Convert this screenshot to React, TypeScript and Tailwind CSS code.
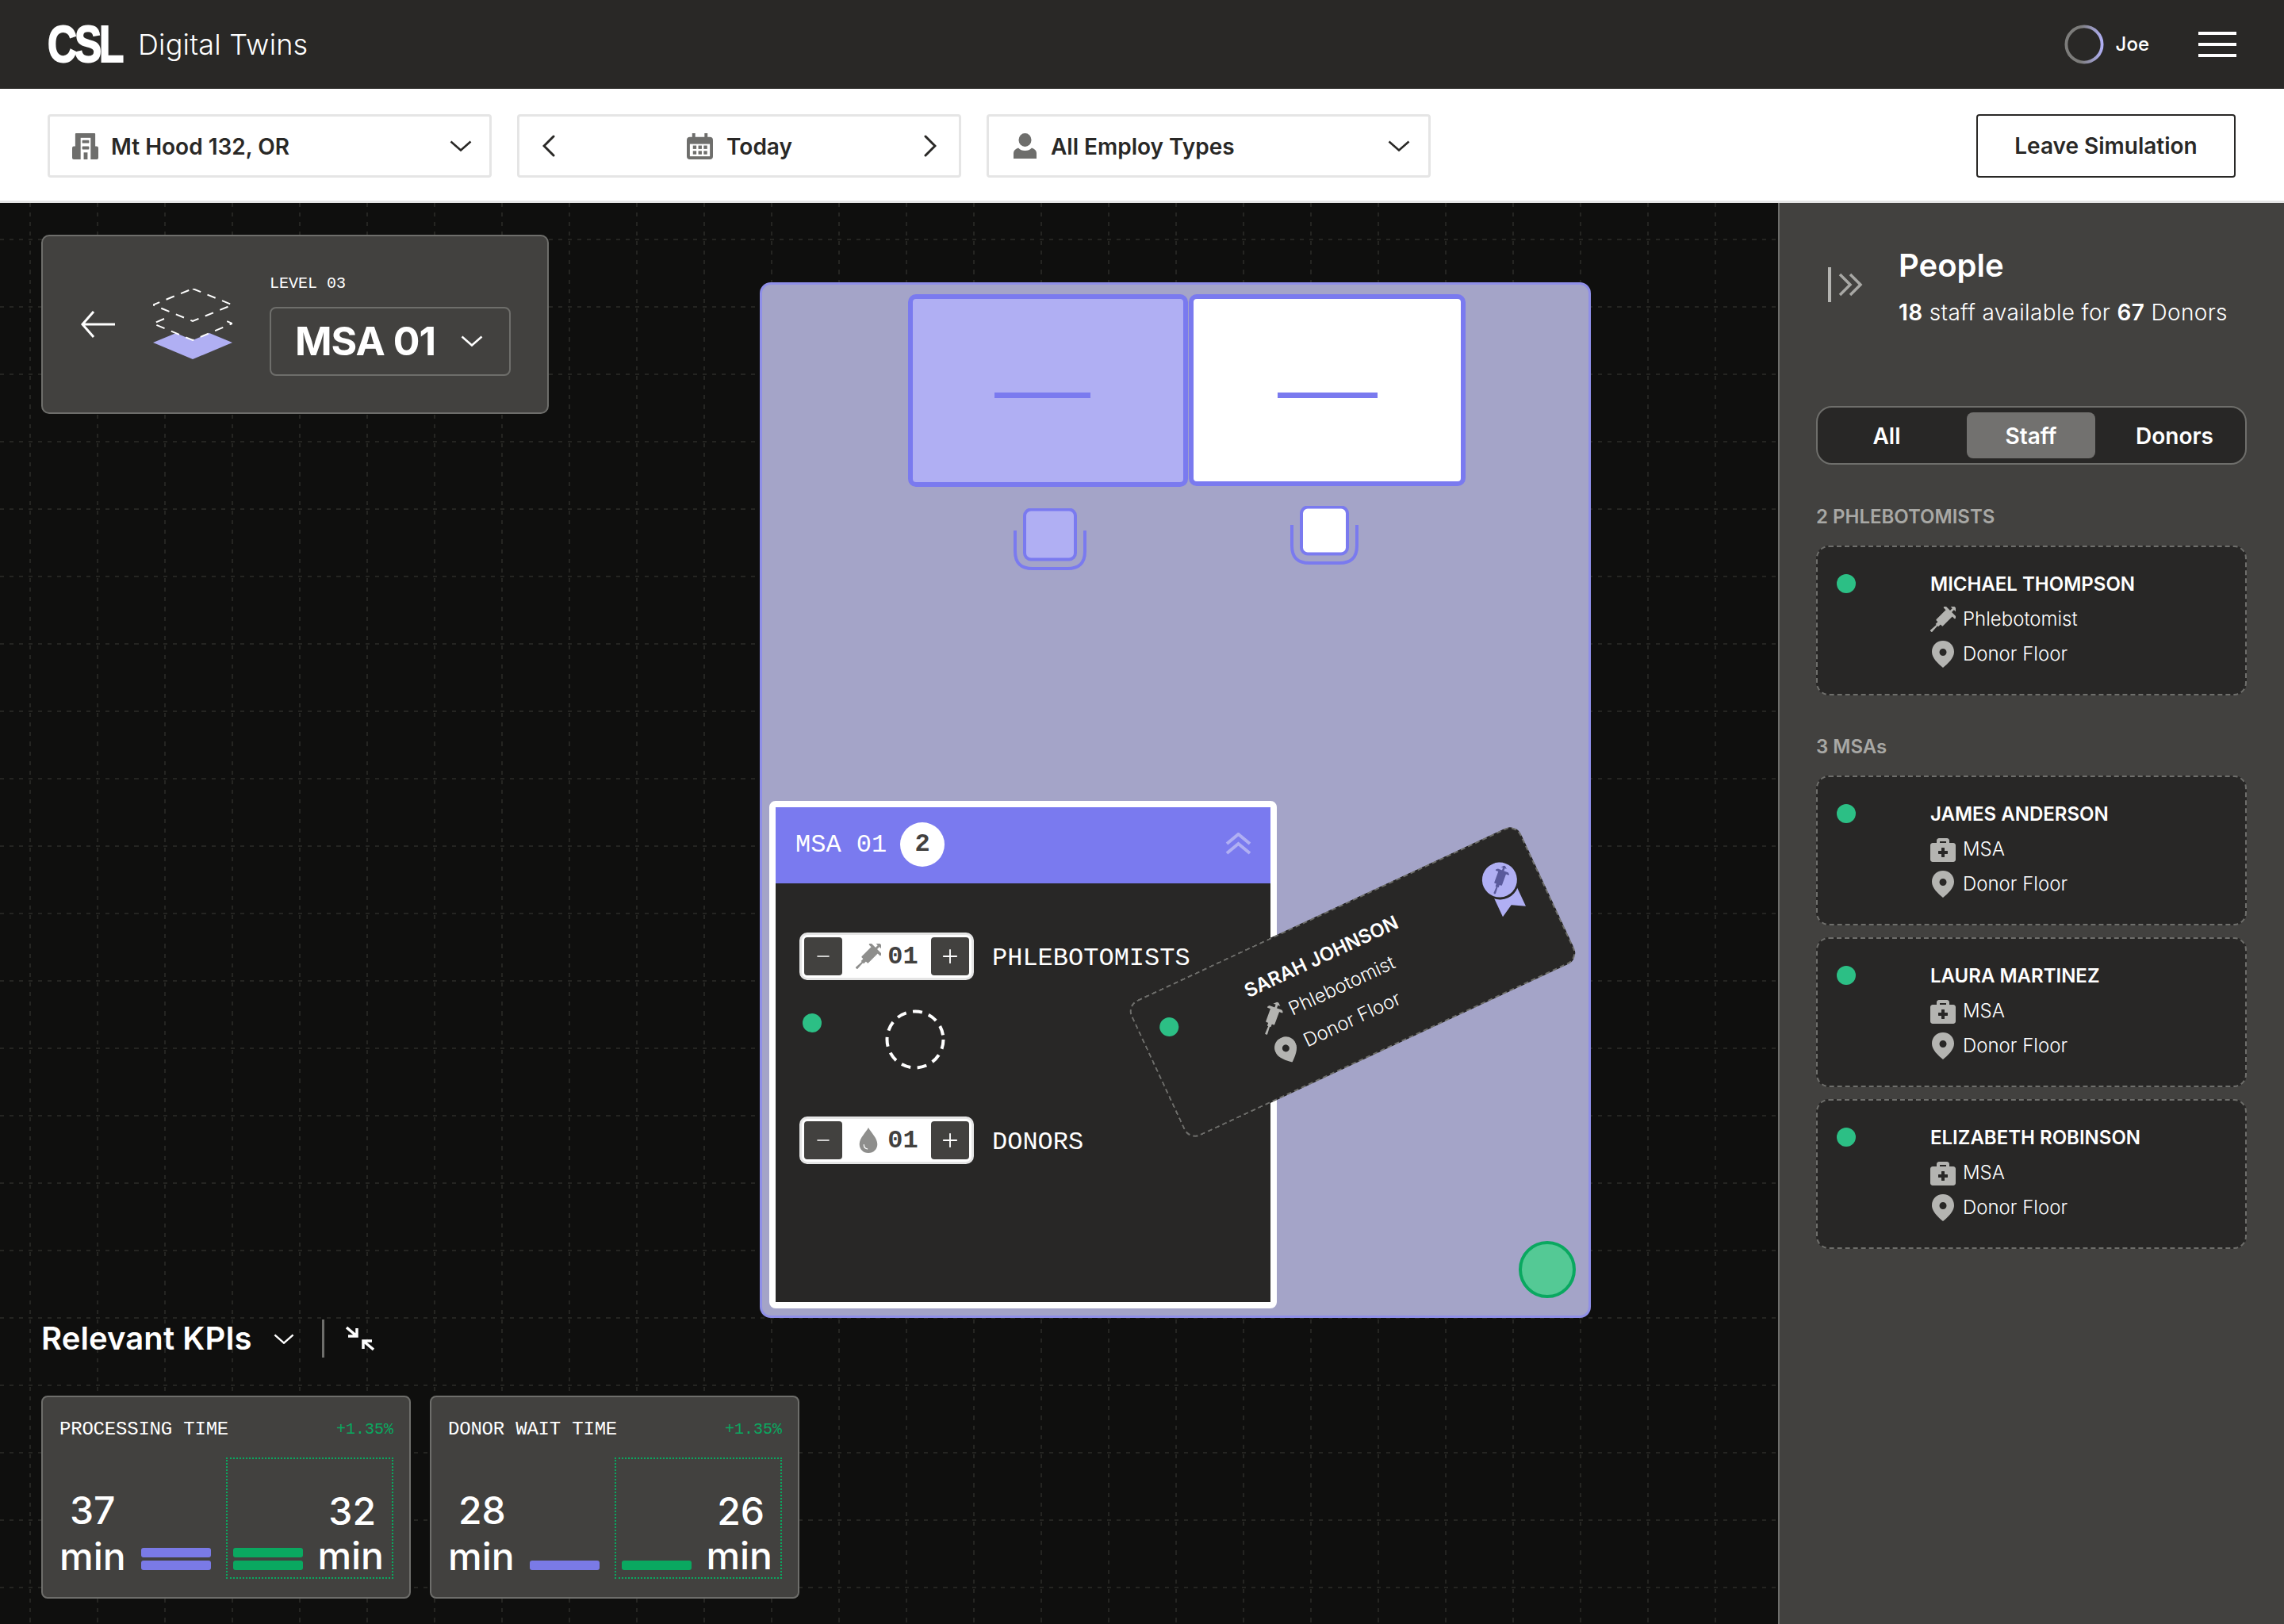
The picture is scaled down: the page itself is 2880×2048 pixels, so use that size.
import React from "react";
import { Minus, Plus } from "lucide-react";
import { FaBriefcaseMedical } from "react-icons/fa";

const mono = "font-['Liberation_Mono',monospace]";

function Chevron({ className = "" }: { className?: string }) {
  return (
    <svg viewBox="0 0 28 14" fill="none" stroke="currentColor" strokeWidth="2.6" className={className}>
      <path d="M1.5 1.5 14 12.5 26.5 1.5" />
    </svg>
  );
}

function DateArrow({ flip = false }: { flip?: boolean }) {
  return (
    <svg viewBox="0 0 16 28" fill="none" stroke="#292826" strokeWidth="3" strokeLinecap="round" className="h-[28px] w-[16px]">
      <path d={flip ? "M2 2 14 14 2 26" : "M14 2 2 14 14 26"} />
    </svg>
  );
}

function BuildingIcon() {
  return (
    <svg viewBox="0 0 34 34" className="h-[33px] w-[33px] shrink-0">
      <rect x="0" y="17" width="34" height="17" rx="2" fill="#6e6e6c" />
      <rect x="4" y="0" width="26" height="34" rx="1" fill="#6e6e6c" />
      <rect x="11" y="6" width="13" height="28" fill="#fff" />
      <rect x="13" y="9" width="9" height="4" rx="1" fill="#6e6e6c" />
      <rect x="13" y="17" width="9" height="4" rx="1" fill="#6e6e6c" />
      <rect x="15" y="25" width="5" height="9" fill="#6e6e6c" />
    </svg>
  );
}

function CalendarIcon() {
  return (
    <svg viewBox="0 0 34 34" className="h-[33px] w-[33px] shrink-0">
      <rect x="7" y="0" width="4" height="8" fill="#6e6e6c" />
      <rect x="23" y="0" width="4" height="8" fill="#6e6e6c" />
      <rect x="0" y="5" width="34" height="29" rx="4" fill="#6e6e6c" />
      <rect x="4" y="14" width="26" height="16" fill="#fff" />
      {[8, 15, 22].map((x) =>
        [16, 23].map((y) => <rect key={`${x}-${y}`} x={x} y={y} width="4.5" height="4.5" fill="#6e6e6c" />)
      )}
    </svg>
  );
}

function PersonIcon() {
  return (
    <svg viewBox="0 0 29 32" className="h-[32px] w-[29px] shrink-0" fill="#6e6e6c">
      <ellipse cx="14.5" cy="8.5" rx="8" ry="8.5" />
      <path d="M0 32v-7c0-3 2-5 6-6.500 2 2.500 5 3.500 8.500 3.500s6.500-1 8.500-3.500c4 1.500 6 3.500 6 6.500v7z" />
    </svg>
  );
}

function PinIcon() {
  return (
    <svg viewBox="0 0 28 34" className="h-[34px] w-[28px] shrink-0">
      <path
        fillRule="evenodd"
        fill="#b4b4b1"
        d="M14 0C6 0 0 6 0 14c0 8 8 15 14 20 6-5 14-12 14-20C28 6 22 0 14 0zm0 10a4.500 4.500 0 1 1 0 9 4.500 4.500 0 0 1 0-9z"
      />
    </svg>
  );
}

function SyringeIcon({ size = 32, color = "#b4b4b1" }: { size?: number; color?: string }) {
  return (
    <svg viewBox="0 0 32 32" width={size} height={size} className="shrink-0" fill={color}>
      <g transform="translate(16 16) rotate(45) scale(.98) translate(-16 -22)">
        <path d="M15 32h2l.6 12h-3.200z" />
        <rect x="13.500" y="27" width="5" height="6" />
        <rect x="10" y="10" width="12" height="19" rx="1" />
        <rect x="5.500" y="7.500" width="21" height="3.500" rx="1" />
        <rect x="14.500" y="3" width="3" height="6" />
        <rect x="9.500" y="0" width="13" height="3.500" rx="1" />
      </g>
    </svg>
  );
}

function DropIcon() {
  return (
    <svg viewBox="0 0 24 34" className="h-[32px] w-[24px]">
      <path fill="#8e8e8c" d="M12 0C9 6 0 14 0 22c0 7 5 12 12 12s12-5 12-12C24 14 15 6 12 0z" />
      <path fill="none" stroke="#fff" strokeWidth="1.400" strokeLinecap="round" d="M6 23c0 3 2 5 4.500 5.500" />
    </svg>
  );
}

function LayersIcon() {
  return (
    <svg viewBox="0 0 100 90" className="h-[90px] w-[100px] shrink-0" fill="none" stroke="#fff" strokeWidth="2">
      <polygon points="0,68 29,56 50,65 71,56 100,68 50,89" fill="#b0aff3" stroke="none" />
      <path strokeDasharray="11 9" d="M50 0 100 20.500 50 41 0 20.500Z" />
      <path strokeDasharray="11 9" d="M14 38 0 44 50 65 100 44 86 38" />
    </svg>
  );
}

function PersonCard({ name, role, roleIcon }: { name: string; role: string; roleIcon: "syringe" | "kit" }) {
  return (
    <div className="flex h-[189px] w-[543px] rounded-[16px] border-2 border-dashed border-[#6e6e6b] bg-[#282726] pl-[24px] pt-[34px] font-['Inter',sans-serif]">
      <div className="h-[24px] w-[24px] shrink-0 rounded-full bg-[#2cbf85]" />
      <div className="ml-[94px] -mt-[3px]">
        <div className="text-[24px] leading-[32px] font-semibold uppercase text-white">{name}</div>
        <div className="mt-[6px] flex h-[44px] items-center gap-[9px] text-[24px] font-light text-white">
          <span className="flex w-[32px] justify-center">
            {roleIcon === "syringe" ? <SyringeIcon /> : <FaBriefcaseMedical size={32} color="#b4b4b1" />}
          </span>
          {role}
        </div>
        <div className="flex h-[44px] items-center gap-[9px] text-[24px] font-light text-white">
          <span className="flex w-[32px] justify-center">
            <PinIcon />
          </span>
          Donor Floor
        </div>
      </div>
    </div>
  );
}

function Stepper({ icon }: { icon: React.ReactNode }) {
  return (
    <div className="flex h-[60px] w-[220px] shrink-0 items-center justify-between rounded-[10px] border-[3px] border-[#e5e5e5] bg-white px-[3px]">
      <span className="flex h-[48px] w-[48px] items-center justify-center rounded-[4px] bg-[#42413f] text-white">
        <Minus size={24} strokeWidth={1.6} />
      </span>
      <span className="flex items-center gap-[8px]">
        <span className="flex w-[33px] justify-center">{icon}</span>
        <span className={`${mono} pt-[2px] text-[32px] font-bold text-[#42413f]`}>01</span>
      </span>
      <span className="flex h-[48px] w-[48px] items-center justify-center rounded-[4px] bg-[#42413f] text-white">
        <Plus size={28} strokeWidth={1.6} />
      </span>
    </div>
  );
}

function Kpi({ title, before, after, barsBefore, barsAfter }: { title: string; before: string; after: string; barsBefore: number; barsAfter: number }) {
  return (
    <div className="h-[256px] w-[466px] rounded-[8px] border-2 border-[#6e6e6b] bg-[#42413f] px-[21px] pt-[25px] pr-[20px] font-['Inter',sans-serif]">
      <div className="flex h-[32px] items-center justify-between">
        <span className={`${mono} text-[24px] tracking-[-0.2px] text-white`}>{title}</span>
        <span className={`${mono} text-[20px] text-[#0aa860]`}>+1.35%</span>
      </div>
      <div className="mt-[19px] flex justify-between">
        <div className="flex h-[153px] w-[191px] flex-col justify-end">
          <div className="mb-[2px] ml-[13px] text-[48px] leading-[56px] font-medium text-white">{before}</div>
          <div className="flex h-[56px] items-end justify-between pb-[11px]">
            <span className="-mb-[11px] text-[48px] leading-[56px] font-medium text-white">min</span>
            <div className="flex w-[88px] flex-col gap-[4px]">
              {Array.from({ length: barsBefore }).map((_, i) => (
                <div key={i} className="h-[12px] rounded-[3px] bg-[#7a7ae6]" />
              ))}
            </div>
          </div>
        </div>
        <div className="flex h-[153px] w-[211px] flex-col justify-end border-2 border-dotted border-[#0aa860] pl-[7px] pr-[10px]">
          <div className="mb-[2px] mr-[10px] text-right text-[48px] leading-[54px] font-medium text-white">{after}</div>
          <div className="flex h-[54px] items-end justify-between pb-[9px]">
            <div className="flex w-[88px] flex-col gap-[4px]">
              {Array.from({ length: barsAfter }).map((_, i) => (
                <div key={i} className="h-[12px] rounded-[3px] bg-[#0aa860]" />
              ))}
            </div>
            <span className="-mb-[9px] text-[48px] leading-[54px] font-medium text-white">min</span>
          </div>
        </div>
      </div>
    </div>
  );
}

function Chair({ className, fill, w, h }: { className: string; fill: string; w: number; h: number }) {
  return (
    <svg viewBox={`0 0 ${w} ${h}`} className={className} fill="none">
      <path
        d={`M2 ${h - 50}V${h - 24}C2 ${h - 8} 10 ${h - 2} 24 ${h - 2}H${w - 24}C${w - 10} ${h - 2} ${w - 2} ${h - 8} ${w - 2} ${h - 24}V${h - 50}`}
        stroke="#7a7aef"
        strokeWidth="4"
      />
      <rect x="14" y="1.500" width={w - 28} height={h - 15} rx="8" fill={fill} stroke="#7a7aef" strokeWidth="4" />
    </svg>
  );
}

export default function App() {
  return (
    <div className="flex h-[2048px] w-[2880px] flex-col overflow-hidden bg-[#0f0f0e] font-['Inter',sans-serif]">
      <header className="flex h-[112px] shrink-0 items-center bg-[#292826] pl-[60px] pr-[60px]">
        <div className="w-[96px] origin-left scale-x-[0.8] text-[64px] leading-none font-bold tracking-[-0.06em] whitespace-nowrap text-white [-webkit-text-stroke:2px_white] font-['Liberation_Sans',sans-serif]">
          CSL
        </div>
        <div className="ml-[18px] text-[36px] font-light tracking-[0.2px] text-white">Digital Twins</div>
        <svg viewBox="0 0 52 52" className="ml-auto h-[50px] w-[50px]" fill="none">
          <defs>
            <linearGradient id="ring" x1="0" x2="1" y1="0" y2="0">
              <stop offset="0.4" stopColor="#7c7c7a" />
              <stop offset="1" stopColor="#b0aff3" />
            </linearGradient>
          </defs>
          <circle cx="26" cy="26" r="23.500" stroke="url(#ring)" strokeWidth="4" />
        </svg>
        <span className="ml-[15px] text-[24px] font-medium text-white">Joe</span>
        <div className="ml-[62px] flex w-[48px] flex-col gap-[10px]">
          <div className="h-[4px] bg-white" />
          <div className="h-[4px] bg-white" />
          <div className="h-[4px] bg-white" />
        </div>
      </header>

      <div className="flex h-[144px] shrink-0 items-start gap-[32px] border-b-[3px] border-[#e5e5e5] bg-white pl-[60px] pr-[61px] pt-[32px] text-[28px] font-semibold text-[#292826]">
        <div className="flex h-[80px] w-[560px] items-center rounded-[4px] border-[3px] border-[#e5e5e5] pl-[28px] pr-[22px]">
          <BuildingIcon />
          <span className="ml-[16px] pt-[1px]">Mt Hood 132, OR</span>
          <Chevron className="ml-auto h-[14px] w-[28px]" />
        </div>
        <div className="flex h-[80px] w-[560px] items-center justify-between rounded-[4px] border-[3px] border-[#e5e5e5] pl-[29px] pr-[28px]">
          <DateArrow />
          <span className="flex items-center gap-[17px]">
            <CalendarIcon />
            <span className="pt-[1px]">Today</span>
          </span>
          <DateArrow flip />
        </div>
        <div className="flex h-[80px] w-[560px] items-center rounded-[4px] border-[3px] border-[#e5e5e5] pl-[31px] pr-[23px]">
          <PersonIcon />
          <span className="ml-[18px] pt-[1px]">All Employ Types</span>
          <Chevron className="ml-auto h-[14px] w-[28px]" />
        </div>
        <button className="ml-auto flex h-[80px] w-[327px] items-center justify-center rounded-[4px] border-2 border-[#292826]">
          Leave Simulation
        </button>
      </div>

      <div className="flex min-h-0 flex-1">
        <main className="relative flex flex-1 flex-col overflow-hidden px-[52px] pt-[40px] pb-[32px]">
          <svg className="absolute inset-0 h-full w-full">
            <defs>
              <pattern id="grid" width="85" height="85" patternUnits="userSpaceOnUse">
                <path d="M38 0V85M0 46H85" stroke="#2b2b29" strokeWidth="1.500" strokeDasharray="5 7" fill="none" />
              </pattern>
            </defs>
            <rect width="100%" height="100%" fill="url(#grid)" />
          </svg>

          <div className="relative flex h-[226px] w-[640px] items-center rounded-[10px] border-2 border-[#6e6e6b] bg-[#42413f] pl-[47px]">
            <svg viewBox="0 0 44 36" className="h-[36px] w-[44px] shrink-0" fill="none" stroke="#fff" strokeWidth="3">
              <path d="M44 18H3M17 2 3 18 17 34" />
            </svg>
            <div className="ml-[48px]">
              <LayersIcon />
            </div>
            <div className="ml-[47px]">
              <div className={`${mono} h-[26px] text-[20px] leading-[26px] text-white`}>LEVEL 03</div>
              <div className="mt-[16px] flex h-[87px] w-[304px] items-center justify-between rounded-[8px] border-2 border-[#6e6e6b] pl-[30px] pr-[33px]">
                <span className="text-[50px] font-bold tracking-[-1px] text-white">MSA 01</span>
                <Chevron className="h-[14px] w-[28px] text-white" />
              </div>
            </div>
          </div>

          {/* floor plan */}
          <div className="absolute left-[958px] top-[100px] h-[1306px] w-[1048px] rounded-[14px] border-[3px] border-[#8f8fe8] bg-[#a4a4c8]">
            <div className="absolute left-[184px] top-[12px] flex h-[243px] w-[353px] items-center justify-center rounded-[10px] border-[6px] border-[#7a7aef] bg-[#b0aff3] pr-[14px] pt-[12px]">
              <div className="h-[7px] w-[121px] bg-[#7a7aef]" />
            </div>
            <div className="absolute left-[538px] top-[12px] flex h-[242px] w-[349px] items-center justify-center rounded-[10px] border-[6px] border-[#7a7aef] bg-white pt-[12px]">
              <div className="h-[7px] w-[126px] bg-[#7a7aef]" />
            </div>
            <Chair className="absolute left-[317px] top-[282px] h-[78px] w-[92px]" fill="#b0aff3" w={92} h={78} />
            <Chair className="absolute left-[666px] top-[279px] h-[74px] w-[86px]" fill="#ffffff" w={86} h={74} />

            <div className="absolute left-[9px] top-[651px] h-[640px] w-[640px] rounded-[8px] border-[8px] border-white bg-[#282726]">
              <div className="flex h-[96px] items-center bg-[#7a7aef] pl-[25px] pr-[24px]">
                <span className={`${mono} text-[32px] text-white`}>MSA 01</span>
                <span className={`${mono} ml-[17px] -mt-[2px] flex h-[56px] w-[56px] items-center justify-center rounded-full bg-white text-[32px] font-bold text-[#42413f]`}>2</span>
                <svg viewBox="0 0 33 28" className="ml-auto -mt-[4px] h-[28px] w-[33px]" fill="none" stroke="#b0aff3" strokeWidth="4">
                  <path d="M2 14 16.500 2 31 14M2 26 16.500 14 31 26" />
                </svg>
              </div>
              <div className="pl-[30px] pt-[62px]">
                <div className="flex items-center">
                  <Stepper icon={<SyringeIcon color="#8e8e8c" />} />
                  <span className={`${mono} ml-[23px] pt-[5px] text-[32px] text-white`}>PHLEBOTOMISTS</span>
                </div>
                <div className="mt-[37px] flex h-[74px] items-start pl-[4px]">
                  <div className="mt-[5px] h-[24px] w-[24px] rounded-full bg-[#2cbf85]" />
                  <svg viewBox="0 0 76 76" className="ml-[80px] h-[76px] w-[76px]" fill="none" stroke="#fff" strokeWidth="4">
                    <circle cx="38" cy="38" r="35.500" strokeDasharray="12 8.500" />
                  </svg>
                </div>
                <div className="mt-[61px] flex items-center">
                  <Stepper icon={<DropIcon />} />
                  <span className={`${mono} ml-[23px] pt-[5px] text-[32px] text-white`}>DONORS</span>
                </div>
              </div>
            </div>

            <div className="absolute left-[954px] top-[1206px] h-[72px] w-[72px] rounded-full border-[4px] border-[#0aa860] bg-[#54c995]" />

            {/* card being dragged */}
            <div className="absolute left-[473px] top-[785px] -rotate-25">
              <PersonCard name="Sarah Johnson" role="Phlebotomist" roleIcon="syringe" />
              <svg viewBox="0 0 60 70" className="absolute left-[464px] top-[34px] h-[70px] w-[60px]">
                <path d="M14 24V66L30 57 46 66V24Z" fill="#b0aff3" />
                <circle cx="30" cy="23" r="24" fill="#282726" />
                <circle cx="30" cy="22" r="22" fill="#b0aff3" />
                <foreignObject x="16" y="8" width="28" height="28">
                  <SyringeIcon size={28} color="#5a5a9c" />
                </foreignObject>
              </svg>
            </div>
          </div>

          <div className="relative mt-auto flex h-[48px] items-center">
            <span className="text-[40px] font-semibold tracking-[0.1px] text-white">Relevant KPIs</span>
            <Chevron className="ml-[27px] h-[13px] w-[26px] text-white" />
            <div className="ml-[35px] h-[48px] w-[3px] bg-[#6e6e6b]" />
            <svg viewBox="0 0 36 32" className="ml-[27px] h-[32px] w-[36px]" fill="none" stroke="#fff" strokeWidth="3.500">
              <path d="M1 2 14 13M14 3V13H3M35 30 22 19M22 29V19H33" />
            </svg>
          </div>
          <div className="relative mt-[48px] flex gap-[24px]">
            <Kpi title="PROCESSING TIME" before="37" after="32" barsBefore={2} barsAfter={2} />
            <Kpi title="DONOR WAIT TIME" before="28" after="26" barsBefore={1} barsAfter={1} />
          </div>
        </main>

        <aside className="w-[638px] shrink-0 border-l-2 border-[#6e6e6b] bg-[#42413f] pl-[46px] pr-[47px] pt-[55px]">
          <div className="flex pl-[15px]">
            <svg viewBox="0 0 44 44" className="mt-[26px] h-[44px] w-[44px] shrink-0" fill="none" stroke="#a8a8a5" strokeWidth="4">
              <path d="M2 0V44" stroke="#b4b4b1" />
              <path d="M15 9 28 22 15 35M28 9 41 22 28 35" strokeWidth="3.500" />
            </svg>
            <div className="ml-[45px]">
              <div className="text-[40px] leading-[48px] font-semibold text-white">People</div>
              <div className="mt-[17px] text-[28px] leading-[36px] font-light tracking-[0.35px] text-white">
                <span className="font-semibold">18</span> staff available for <span className="font-semibold">67</span> Donors
              </div>
            </div>
          </div>

          <div className="mt-[100px] flex h-[74px] items-center gap-[14px] rounded-[20px] border-2 border-[#6e6e6b] bg-[#282726] text-[28px] font-semibold text-white">
            <span className="w-[174px] pt-[2px] text-center">All</span>
            <span className="flex h-[58px] w-[162px] items-center justify-center rounded-[8px] bg-[#72716f] pt-[2px]">Staff</span>
            <span className="w-[172px] pt-[2px] text-center">Donors</span>
          </div>

          <div className="mt-[51px] text-[24px] leading-[30px] font-semibold text-[#a8a8a5]">2 PHLEBOTOMISTS</div>
          <div className="mt-[21px]">
            <PersonCard name="Michael Thompson" role="Phlebotomist" roleIcon="syringe" />
          </div>
          <div className="mt-[50px] text-[24px] leading-[30px] font-semibold text-[#a8a8a5]">3 MSAs</div>
          <div className="mt-[21px] flex flex-col gap-[15px]">
            <PersonCard name="James Anderson" role="MSA" roleIcon="kit" />
            <PersonCard name="Laura Martinez" role="MSA" roleIcon="kit" />
            <PersonCard name="Elizabeth Robinson" role="MSA" roleIcon="kit" />
          </div>
        </aside>
      </div>
    </div>
  );
}
